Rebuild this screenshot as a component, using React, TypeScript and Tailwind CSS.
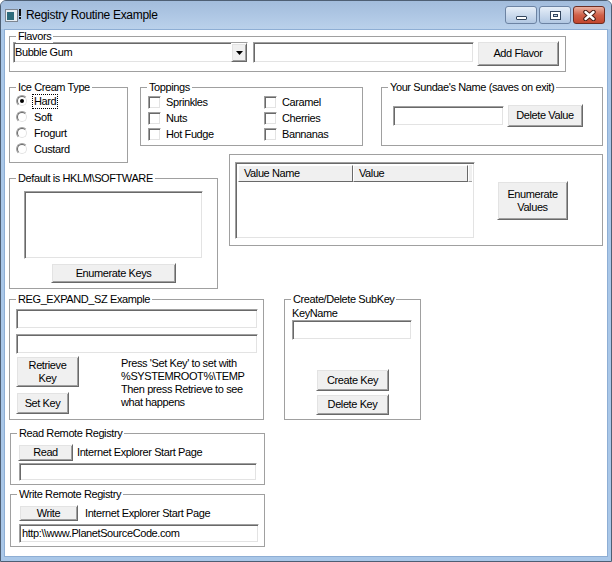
import type { ReactNode } from "react";

const raised =
  "flex items-center justify-center text-center bg-[#f0f0f0] border border-t-white border-l-white border-r-[#696969] border-b-[#696969] shadow-[inset_1px_1px_#e3e3e3,inset_-1px_-1px_#a0a0a0]";
const sunken =
  "bg-white border border-t-[#a0a0a0] border-l-[#a0a0a0] border-r-white border-b-white shadow-[inset_1px_1px_#696969,inset_-1px_-1px_#e3e3e3]";

function Frame({ title, className, children }: { title?: string; className: string; children?: ReactNode }) {
  return (
    <div className={`relative shrink-0 border border-[#a0a0a0] ${className}`}>
      {title && (
        <span className="absolute left-[6px] -top-[7px] bg-white px-[2px] leading-[13px] whitespace-nowrap">
          {title}
        </span>
      )}
      {children}
    </div>
  );
}

function Radio({ label, checked }: { label: string; checked?: boolean }) {
  return (
    <div className="flex h-[16px] items-center">
      <div className="ml-[6px] h-[12px] w-[12px] rounded-full border border-t-[#a0a0a0] border-l-[#a0a0a0] border-r-white border-b-white">
        <div className="flex h-full w-full items-center justify-center rounded-full border border-t-[#696969] border-l-[#696969] border-r-[#e3e3e3] border-b-[#e3e3e3] bg-white">
          {checked && <div className="h-[4px] w-[4px] rounded-full bg-black" />}
        </div>
      </div>
      <span
        className={`ml-[4px] border px-[1px] leading-[13px] ${checked ? "border-dotted border-black" : "border-transparent"}`}
      >
        {label}
      </span>
    </div>
  );
}

function Check({ label }: { label: string }) {
  return (
    <div className="flex h-[16px] items-center">
      <div className={`h-[13px] w-[13px] ${sunken}`} />
      <span className="ml-[5px]">{label}</span>
    </div>
  );
}

export default function App() {
  return (
    <div className="flex h-[562px] w-[612px] flex-col overflow-hidden rounded-t-[6px] border border-[#4e5f74] bg-[#a9c7e8] font-['Liberation_Sans',Arial,sans-serif] text-black">
      {/* title bar */}
      <div className="flex h-[28px] items-start bg-linear-to-b from-[#a2bcdc] to-[#bad1eb] pl-[4px] pr-[6px]">
        <svg width="16" height="16" viewBox="0 0 16 16" className="mt-[6px]">
          <rect x="0.5" y="2.5" width="12" height="12" fill="#e8eef4" stroke="#7d8590" />
          <rect x="2" y="5" width="7" height="8" fill="#2c6b7c" />
          <rect x="14" y="2" width="2" height="7" fill="#111" />
          <rect x="14" y="10" width="2" height="2" fill="#111" />
        </svg>
        <span className="ml-[5px] mt-[7px] text-[12px] leading-[15px] tracking-[-0.3px]">
          Registry Routine Example
        </span>
        <div className="flex-1" />
        <div className="mt-[5px] flex gap-[2px]">
          <div className="flex h-[18px] w-[32px] items-end justify-center rounded-[3px] border border-[#6c83a3] bg-linear-to-b from-[#e6eef8] to-[#b1c7e2] pb-[3px]">
            <div className="h-[4px] w-[11px] rounded-[1px] border border-[#34465e] bg-white" />
          </div>
          <div className="flex h-[18px] w-[32px] items-center justify-center rounded-[3px] border border-[#6c83a3] bg-linear-to-b from-[#e6eef8] to-[#b1c7e2]">
            <div className="flex h-[9px] w-[11px] items-center justify-center border border-[#34465e] bg-white">
              <div className="h-[3px] w-[5px] border border-[#34465e] bg-[#c9d8eb]" />
            </div>
          </div>
          <div className="flex h-[18px] w-[32px] items-center justify-center rounded-[3px] border border-[#6d2d22] bg-linear-to-b from-[#eab0a0] via-[#d0614a] to-[#c2452d]">
            <svg width="13" height="11" viewBox="0 0 13 11">
              <path d="M2.5 2 L10.5 9 M10.5 2 L2.5 9" stroke="#4a2018" strokeWidth="4.5" strokeLinecap="round" />
              <path d="M2.5 2 L10.5 9 M10.5 2 L2.5 9" stroke="#fff" strokeWidth="2.4" strokeLinecap="round" />
            </svg>
          </div>
        </div>
      </div>

      {/* client area */}
      <div className="mx-[3px] mb-[4px] flex-1 border border-[#8eaed4] bg-white pl-[4px] pt-[6px] text-[11px] leading-[13px] tracking-[-0.4px]">
        {/* Flavors */}
        <Frame title="Flavors" className="flex h-[36px] w-[557px] items-start">
          <div className={`ml-[3px] mt-[5px] flex h-[21px] w-[235px] items-stretch ${sunken}`}>
            <span className="flex flex-1 items-center pl-[1px]">Bubble Gum</span>
            <div className={`w-[16px] ${raised}`}>
              <svg width="7" height="4" viewBox="0 0 7 4">
                <path d="M0 0 H7 L3.5 4 Z" fill="#000" />
              </svg>
            </div>
          </div>
          <div className={`ml-[5px] mt-[5px] h-[21px] w-[221px] ${sunken}`} />
          <div className={`ml-[3px] mt-[4px] h-[25px] w-[82px] ${raised}`}>Add Flavor</div>
        </Frame>

        {/* row 2 */}
        <div className="mt-[15px] flex items-start">
          <Frame title="Ice Cream Type" className="h-[76px] w-[119px] pt-[5px]">
            <Radio label="Hard" checked />
            <Radio label="Soft" />
            <Radio label="Frogurt" />
            <Radio label="Custard" />
          </Frame>
          <Frame title="Toppings" className="ml-[12px] grid h-[59px] w-[223px] grid-cols-[116px_1fr] content-start pl-[7px] pt-[6px]">
            <Check label="Sprinkles" />
            <Check label="Caramel" />
            <Check label="Nuts" />
            <Check label="Cherries" />
            <Check label="Hot Fudge" />
            <Check label="Bannanas" />
          </Frame>
          <Frame title="Your Sundae's Name (saves on exit)" className="ml-[18px] flex h-[59px] w-[222px] items-start">
            <div className={`ml-[11px] mt-[18px] h-[20px] w-[111px] ${sunken}`} />
            <div className={`ml-[3px] mt-[16px] h-[23px] w-[76px] ${raised}`}>Delete Value</div>
          </Frame>
        </div>

        {/* row 3 */}
        <div className="flex items-start">
          <Frame title="Default is HKLM\SOFTWARE" className="mt-[15px] flex h-[111px] w-[209px] flex-col items-center">
            <div className={`mt-[12px] h-[68px] w-[179px] ${sunken}`} />
            <div className={`mt-[4px] h-[20px] w-[125px] ${raised}`}>Enumerate Keys</div>
          </Frame>
          <Frame className="-mt-[9px] ml-[11px] flex h-[92px] w-[374px] items-start">
            <div className={`ml-[5px] mt-[7px] flex h-[77px] w-[240px] flex-col p-[2px] ${sunken}`}>
              <div className="flex h-[17px]">
                <div className="flex w-[115px] items-center border-r border-b border-r-[#696969] border-b-[#696969] border-l border-t border-l-white border-t-white bg-[#f0f0f0] pl-[5px]">
                  Value Name
                </div>
                <div className="flex w-[115px] items-center border-r border-b border-r-[#696969] border-b-[#696969] border-l border-t border-l-white border-t-white bg-[#f0f0f0] pl-[5px]">
                  Value
                </div>
                <div className="flex-1 border-b border-l border-b-[#a0a0a0] border-l-white bg-[#f0f0f0]" />
              </div>
            </div>
            <div className={`ml-[22px] mt-[26px] h-[39px] w-[71px] ${raised}`}>
              Enumerate
              <br />
              Values
            </div>
          </Frame>
        </div>

        {/* row 4 */}
        <div className="mt-[10px] flex items-start">
          <Frame title="REG_EXPAND_SZ Example" className="h-[121px] w-[255px] pl-[6px] pt-[9px]">
            <div className={`h-[20px] w-[242px] ${sunken}`} />
            <div className={`mt-[5px] h-[20px] w-[242px] ${sunken}`} />
            <div className="flex items-start">
              <div className="flex flex-col">
                <div className={`mt-[2px] h-[31px] w-[63px] ${raised}`}>
                  Retrieve
                  <br />
                  Key
                </div>
                <div className={`mt-[5px] h-[22px] w-[53px] ${raised}`}>Set Key</div>
              </div>
              <p className="ml-[42px] mt-[3px] whitespace-nowrap">
                Press 'Set Key' to set with
                <br />
                %SYSTEMROOT%\TEMP
                <br />
                Then press Retrieve to see
                <br />
                what happens
              </p>
            </div>
          </Frame>
          <Frame title="Create/Delete SubKey" className="ml-[20px] flex h-[121px] w-[137px] flex-col pl-[7px] pt-[7px]">
            <span>KeyName</span>
            <div className={`h-[20px] w-[120px] ${sunken}`} />
            <div className={`ml-[24px] mt-[29px] h-[22px] w-[73px] ${raised}`}>Create Key</div>
            <div className={`ml-[24px] mt-[3px] h-[21px] w-[73px] ${raised}`}>Delete Key</div>
          </Frame>
        </div>

        {/* row 5 */}
        <Frame title="Read Remote Registry" className="ml-[1px] mt-[13px] h-[52px] w-[255px] pt-[10px]">
          <div className="flex items-center">
            <div className={`ml-[7px] h-[17px] w-[55px] ${raised}`}>Read</div>
            <span className="ml-[4px]">Internet Explorer Start Page</span>
          </div>
          <div className={`ml-[8px] mt-[2px] h-[18px] w-[238px] ${sunken}`} />
        </Frame>

        {/* row 6 */}
        <Frame title="Write Remote Registry" className="ml-[1px] mt-[9px] h-[53px] w-[255px] pt-[10px]">
          <div className="flex items-center">
            <div className={`ml-[8px] h-[16px] w-[59px] ${raised}`}>Write</div>
            <span className="ml-[7px]">Internet Explorer Start Page</span>
          </div>
          <div className={`ml-[8px] mt-[3px] flex h-[19px] w-[240px] items-center pl-[2px] ${sunken}`}>
            http:\\www.PlanetSourceCode.com
          </div>
        </Frame>
      </div>
    </div>
  );
}
